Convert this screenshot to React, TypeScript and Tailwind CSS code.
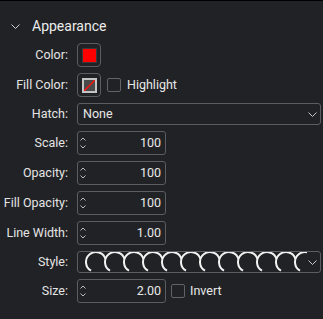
import React from 'react';

const font = { fontFamily: 'Roboto, "Liberation Sans", sans-serif' };

function Caret({ up }: { up?: boolean }) {
  return (
    <svg width="6" height="4" viewBox="0 0 6 4" className="block">
      <path
        d={up ? 'M0.5 3.5 L3 1 L5.5 3.5' : 'M0.5 0.5 L3 3 L5.5 0.5'}
        fill="none"
        stroke="#bdbdbd"
        strokeWidth="1"
      />
    </svg>
  );
}

function Spin({ value }: { value: string }) {
  return (
    <div className="flex h-[24px] w-[89px] items-center justify-between rounded-[3px] border border-[#5c5d60] pl-[2px] pr-[4px]">
      <div className="flex h-full flex-col justify-between py-[5px]">
        <Caret up />
        <Caret />
      </div>
      <span className="text-[12.5px] text-[#e8e8e8]">{value}</span>
    </div>
  );
}

function SelectChevron() {
  return (
    <svg width="9" height="5" viewBox="0 0 9 5" className="block">
      <path d="M0.5 0.5 L4.5 4.5 L8.5 0.5" fill="none" stroke="#c8c8c8" strokeWidth="1" />
    </svg>
  );
}

function Checkbox() {
  return <div className="h-[14px] w-[14px] rounded-[2px] border border-[#626366]" />;
}

function Label({ children }: { children: React.ReactNode }) {
  return <div className="text-right text-[12.5px] text-[#e4e4e4]">{children}</div>;
}

function CloudLine() {
  const arcs = [];
  for (let i = 0; i < 12; i++) {
    const cx = 15 + i * 19;
    const cy = 11;
    arcs.push(
      <path
        key={i}
        d={`M${cx - 5} ${cy + 8.7} A10 10 0 1 1 ${cx + 9.5} ${cy - 3.1}`}
        fill="none"
        stroke="#f2f2f2"
        strokeWidth="2"
      />
    );
  }
  return (
    <svg width="226" height="22" viewBox="0 0 226 22" className="block">
      {arcs}
    </svg>
  );
}

export default function App() {
  return (
    <div className="h-[319px] w-[323px] overflow-hidden border-t border-black bg-[#212225]" style={font}>
      <div className="flex items-center pl-[11px] pt-[15px]">
        <svg width="9" height="5" viewBox="0 0 9 5" className="block">
          <path d="M0.5 0.5 L4.5 4.5 L8.5 0.5" fill="none" stroke="#cfcfcf" strokeWidth="1" />
        </svg>
        <span className="ml-[12px] text-[14px] text-[#ececec]">Appearance</span>
      </div>

      <div className="mt-[6px] grid grid-cols-[68px_1fr] items-center gap-x-[9px] gap-y-[6px] pr-[2px]">
        <Label>Color:</Label>
        <div className="flex">
          <div className="flex h-[24px] w-[24px] items-center justify-center rounded-[4px] border border-[#5c5d60]">
            <div className="h-[15px] w-[15px] border border-[#3a3a3a] bg-[#ff0000]" />
          </div>
        </div>

        <Label>Fill Color:</Label>
        <div className="flex items-center">
          <div className="flex h-[24px] w-[24px] items-center justify-center rounded-[4px] border border-[#5c5d60]">
            <div className="relative h-[15px] w-[15px] border-2 border-[#c4c4c4] bg-[#4a4a4a]">
              <svg width="11" height="11" viewBox="0 0 11 11" className="absolute left-0 top-0">
                <path d="M0 11 L11 0" stroke="#ff1010" strokeWidth="1.5" />
              </svg>
            </div>
          </div>
          <div className="ml-[6px]">
            <Checkbox />
          </div>
          <span className="ml-[6px] text-[12.5px] text-[#e8e8e8]">Highlight</span>
        </div>

        <Label>Hatch:</Label>
        <div className="flex h-[22px] items-center justify-between rounded-[3px] border border-[#5c5d60] pl-[5px] pr-[3px]">
          <span className="text-[12.5px] text-[#e8e8e8]">None</span>
          <SelectChevron />
        </div>

        <Label>Scale:</Label>
        <div className="flex">
          <Spin value="100" />
        </div>

        <Label>Opacity:</Label>
        <div className="flex">
          <Spin value="100" />
        </div>

        <Label>Fill Opacity:</Label>
        <div className="flex">
          <Spin value="100" />
        </div>

        <Label>Line Width:</Label>
        <div className="flex">
          <Spin value="1.00" />
        </div>

        <Label>Style:</Label>
        <div className="flex h-[22px] items-center justify-between overflow-hidden rounded-[3px] border border-[#5c5d60] pl-[3px] pr-[3px]">
          <CloudLine />
          <SelectChevron />
        </div>

        <Label>Size:</Label>
        <div className="flex items-center">
          <Spin value="2.00" />
          <div className="ml-[5px]">
            <Checkbox />
          </div>
          <span className="ml-[5px] text-[12.5px] text-[#e8e8e8]">Invert</span>
        </div>
      </div>
    </div>
  );
}
